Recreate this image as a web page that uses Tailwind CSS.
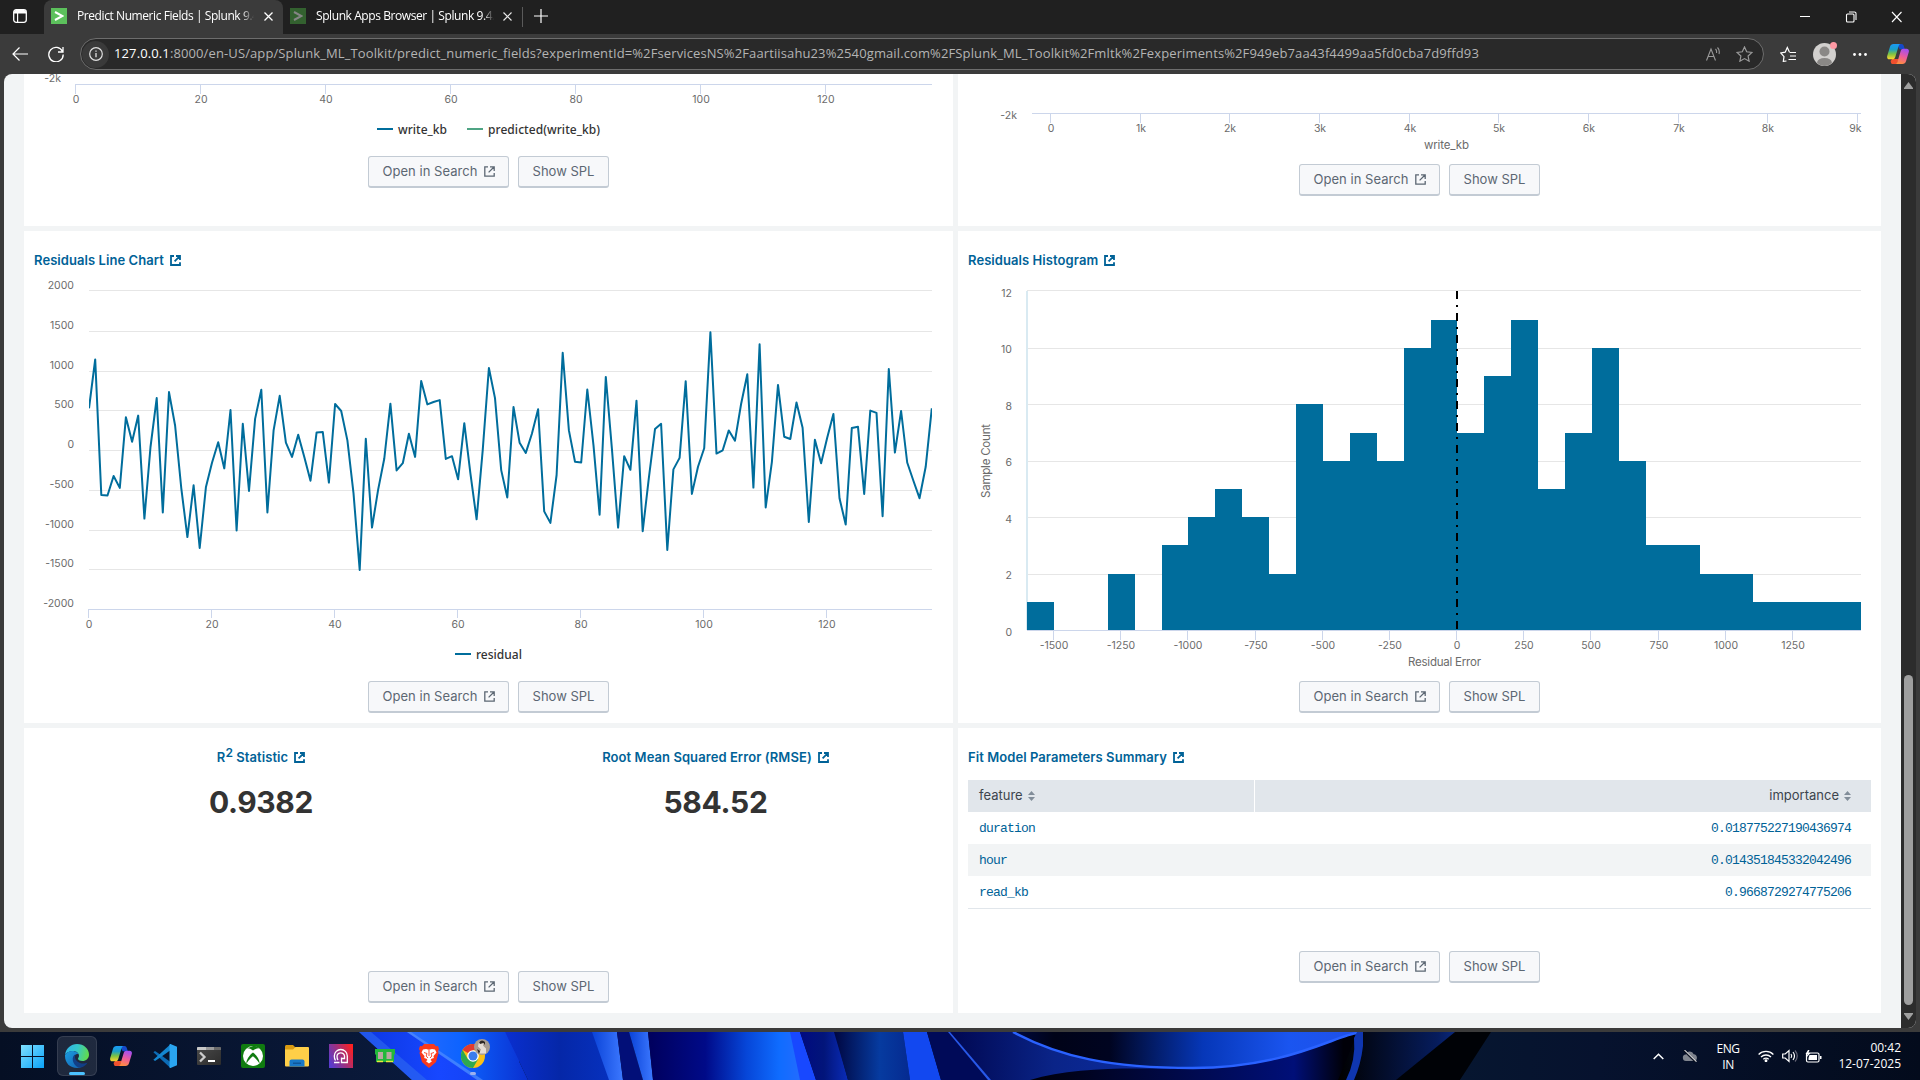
<!DOCTYPE html>
<html lang="en">
<head>
<meta charset="utf-8">
<title>Predict Numeric Fields | Splunk</title>
<script src="https://cdn.jsdelivr.net/npm/@tailwindcss/browser@4"></script>
</head>
<body class="w-[1920px] h-[1080px] overflow-hidden bg-[#3b3b3b] font-[Inter,sans-serif] flex flex-col">

<!-- shared symbols -->
<svg class="absolute w-0 h-0">
  <symbol id="ext" viewBox="0 0 11 11"><path d="M4 .8H.8v9.4h9.4V7M6 .8h4.2V5M10 1 4.6 6.4" fill="none" stroke="currentColor" stroke-width="1.3"/></symbol>
  <symbol id="extb" viewBox="0 0 11 11"><path d="M4 1H1v9h9V7.2M6 1h4v4M9.8 1.2 4.6 6.4" fill="none" stroke="currentColor" stroke-width="1.8"/></symbol>
  <symbol id="sort" viewBox="0 0 7 10"><path d="M0 4 3.5 0 7 4zM0 6h7L3.5 10z" fill="#818d99"/></symbol>
  <linearGradient id="cpA" x1="0" y1="0" x2="0" y2="1"><stop offset="0" stop-color="#1b9af5"/><stop offset=".35" stop-color="#1aa0c8"/><stop offset=".65" stop-color="#7cc242"/><stop offset="1" stop-color="#ffd52e"/></linearGradient>
  <linearGradient id="cpB" x1=".6" y1="0" x2=".3" y2="1"><stop offset="0" stop-color="#a44ff0"/><stop offset=".5" stop-color="#ee5c9a"/><stop offset="1" stop-color="#ff8f3c"/></linearGradient>
  <symbol id="copilot" viewBox="0 0 22 20">
    <path d="M12 0h2.4c1.4 0 2 .8 2.4 2l1 3.2h-5.2L10.5 1z" fill="#1549c9"/>
    <path d="M5.2 20h4.6l2-5H5L3.600 17c.3 2 .8 3 1.600 3z" fill="#f0502e"/>
    <path d="M6.500 0h7c-1.200.3-1.700 1.400-2.100 2.800L8.300 13c-.5 1.500-1.200 2.300-2.800 2.300H2.300C.6 15.300-.2 14 .2 12L3 2.800C3.600 1 4.600 0 6.500 0z" fill="url(#cpA)"/>
    <path d="M15.500 20h-7c1.200-.3 1.700-1.400 2.100-2.800L13.700 7c.5-1.500 1.200-2.300 2.800-2.300h3.200c1.700 0 2.500 1.300 2.100 3.300L19 17.200c-.6 1.800-1.600 2.800-3.500 2.800z" fill="url(#cpB)"/>
  </symbol>
</svg>

<!-- tab strip -->
<header class="h-[34px] shrink-0 bg-[#202020] flex items-end font-['Open_Sans',sans-serif] text-xs text-white">
  <div class="w-11 h-full flex items-center pl-[13px] pb-[2px]">
    <svg class="w-[14px] h-[14px]" viewBox="0 0 14 14"><rect x=".7" y=".7" width="12.600" height="12.600" rx="2.500" fill="none" stroke="#fff" stroke-width="1.300"/><path d="M1 3a2 2 0 0 1 2-2h8a2 2 0 0 1 2 2v1.500H1zM4 4h1.200v9H4z" fill="#fff"/></svg>
  </div>
  <div class="w-[239px] h-[34px] bg-[#3b3b3b] rounded-t-lg flex items-center pl-[7px] pb-[2px]">
    <div class="w-4 h-4 bg-[#5cc05c] flex items-center justify-center"><svg class="w-[10px] h-[10px]" viewBox="0 0 10 10"><path d="M1 1l7.500 4L1 9" fill="none" stroke="#fff" stroke-width="2"/></svg></div>
    <div class="ml-[10px] w-[177px] whitespace-nowrap tracking-[-0.42px] [mask-image:linear-gradient(90deg,#000_93%,transparent)]">Predict Numeric Fields | Splunk 9.4</div>
    <svg class="ml-[10px] w-[9px] h-[9px]" viewBox="0 0 9 9"><path d="M.5.5l8 8M8.500.5l-8 8" stroke="#fff" stroke-width="1.300"/></svg>
  </div>
  <div class="w-[240px] h-[34px] flex items-center pl-[7px] pb-[2px]">
    <div class="w-4 h-4 bg-[#33612f] flex items-center justify-center"><svg class="w-[10px] h-[10px]" viewBox="0 0 10 10"><path d="M1 1l7.500 4L1 9" fill="none" stroke="#858585" stroke-width="2"/></svg></div>
    <div class="ml-[10px] w-[178px] whitespace-nowrap tracking-[-0.42px] [mask-image:linear-gradient(90deg,#000_94%,transparent)]">Splunk Apps Browser | Splunk 9.4.</div>
    <svg class="ml-[9px] w-[9px] h-[9px]" viewBox="0 0 9 9"><path d="M.5.5l8 8M8.500.5l-8 8" stroke="#e8e8e8" stroke-width="1.200"/></svg>
  </div>
  <div class="w-px h-5 bg-[#5a5a5a] mb-[7px] -ml-px"></div>
  <svg class="ml-[11px] mb-[11px] w-[14px] h-[14px]" viewBox="0 0 14 14"><path d="M7 0v14M0 7h14" stroke="#fff" stroke-width="1.200"/></svg>
  <svg class="ml-auto mr-[18px] mb-[11px] w-[102px] h-[12px]" viewBox="0 0 102 12" fill="none" stroke="#fff" stroke-width="1.100"><path d="M0 5.500h10M92 1l9.500 10M101.500 1 92 11"/><rect x="46.500" y="3" width="7.500" height="8" rx="1"/><path d="M49 1h5.500a1.500 1.500 0 0 1 1.500 1.500V9"/></svg>
</header>

<!-- toolbar -->
<div class="h-10 shrink-0 flex items-center pl-3 font-['Open_Sans',sans-serif]">
  <svg class="w-4 h-[14px]" viewBox="0 0 16 14" fill="none" stroke="#fff" stroke-width="1.200"><path d="M16 7H1M7.500.5 1 7l6.500 6.500"/></svg>
  <svg class="ml-5 w-4 h-4" viewBox="0 0 16 16" fill="none" stroke="#fff" stroke-width="1.300"><path d="M14.500 5.500A7.200 7.200 0 1 0 15.200 8.500M15 1v5h-5"/></svg>
  <div class="ml-4 w-[1684px] h-8 rounded-full bg-[#292929] border border-[#6d6d6d] flex items-center">
    <div class="ml-px w-[27px] h-[27px] rounded-full bg-[#3a3a3a] flex items-center justify-center">
      <svg class="w-[14px] h-[14px]" viewBox="0 0 14 14"><circle cx="7" cy="7" r="6.300" fill="none" stroke="#e0e0e0" stroke-width="1.200"/><path d="M7 6v4.300M7 3.500v1.300" stroke="#e0e0e0" stroke-width="1.300"/></svg>
    </div>
    <div class="ml-[5px] text-[13px] text-[#b4b4b4] whitespace-nowrap tracking-[0.115px]"><span class="text-white">127.0.0.1</span>:8000/en-US/app/Splunk_ML_Toolkit/predict_numeric_fields?experimentId=%2FservicesNS%2Faartiisahu23%2540gmail.com%2FSplunk_ML_Toolkit%2Fmltk%2Fexperiments%2F949eb7aa43f4499aa5fd0cba7d9ffd93</div>
    <svg class="ml-auto w-[15px] h-[14px]" viewBox="0 0 15 14" fill="none" stroke="#9a9a9a" stroke-width="1.100"><path d="M.5 13.500 5 2l4.500 11.500M2 9.500h6M9.500 2q1.500 1.500 1 4M11.500.5q2.500 2.500 1.500 6.500"/></svg>
    <svg class="ml-[15px] mr-[10px] w-[17px] h-4" viewBox="0 0 17 16" fill="none" stroke="#9a9a9a" stroke-width="1.200"><path d="M8.500 1l2.200 4.800 5.300.6-3.900 3.600 1 5.200-4.600-2.600-4.600 2.600 1-5.200L1 6.400l5.300-.6z"/></svg>
  </div>
  <svg class="ml-4 w-4 h-4" viewBox="0 0 16 16" fill="none" stroke="#fff" stroke-width="1.200"><path d="M6.500 15 3.300 15.400 4 10.600.7 7l4.500-.8L7.300 1.500 9.400 6M9.500 6.500H16M10 10h6M8.500 13.500H16"/></svg>
  <div class="relative ml-[17px] w-[23px] h-[23px]">
    <svg class="w-[23px] h-[23px]" viewBox="0 0 23 23"><circle cx="11.500" cy="11.500" r="11.500" fill="#d2d0ce"/><circle cx="11.500" cy="8.500" r="5" fill="#8a8886"/><path d="M4 19.500q1-4.500 7.500-4.500T19 19.500Q16 23 11.500 23T4 19.500" fill="#8a8886"/></svg>
    <div class="absolute -top-[1px] right-[-1px] w-[7px] h-[7px] rounded-full bg-[#ff99a4]"></div>
  </div>
  <svg class="ml-[17px] w-[14px] h-[3px]" viewBox="0 0 14 3" fill="#fff"><circle cx="1.500" cy="1.500" r="1.400"/><circle cx="7" cy="1.500" r="1.400"/><circle cx="12.500" cy="1.500" r="1.400"/></svg>
  <svg class="ml-5 w-[22px] h-5"><use href="#copilot"/></svg>
</div>

<!-- page -->
<div class="h-[954px] shrink-0 mx-1 mb-1 rounded-lg overflow-hidden bg-[#f2f4f5] flex">
  <main class="w-[1897px] pl-5 pr-5 grid grid-cols-[929px_923px] grid-rows-[152px_492px_285px] gap-[5px]">

    <section class="bg-white flex flex-col overflow-hidden">
      <svg id="c1" class="w-[929px] h-[82px] shrink-0" viewBox="24 74 929 82"></svg>
      <div class="btns flex gap-[9px] justify-center"></div>
    </section>
    <section class="bg-white flex flex-col overflow-hidden">
      <svg id="c2" class="w-[923px] h-[90px] shrink-0" viewBox="958 74 923 90"></svg>
      <div class="btns flex gap-[9px] justify-center"></div>
    </section>

    <section class="bg-white flex flex-col overflow-hidden">
      <h2 class="pt-[19px] pl-[10px] h-11 shrink-0 flex gap-[6px] items-start leading-5 text-[13px] font-semibold text-[#006297] tracking-[0.07px]"><span>Residuals Line Chart</span><svg class="mt-[5px] w-[11px] h-[11px]"><use href="#extb"/></svg></h2>
      <svg id="c3" class="w-[929px] h-[406px] shrink-0" viewBox="24 275 929 406"></svg>
      <div class="btns flex gap-[9px] justify-center"></div>
    </section>
    <section class="bg-white flex flex-col overflow-hidden">
      <h2 class="pt-[19px] pl-[10px] h-11 shrink-0 flex gap-[6px] items-start leading-5 text-[13px] font-semibold text-[#006297] tracking-[0.07px]"><span>Residuals Histogram</span><svg class="mt-[5px] w-[11px] h-[11px]"><use href="#extb"/></svg></h2>
      <svg id="c4" class="w-[923px] h-[406px] shrink-0" viewBox="958 275 923 406"></svg>
      <div class="btns flex gap-[9px] justify-center"></div>
    </section>

    <section class="bg-white flex flex-col pb-[10px]">
      <div class="grid grid-cols-[474px_435px] pt-[19px] text-center text-[#006297] text-[13px] font-semibold leading-5 tracking-[0.07px]">
        <h2 class="flex gap-[6px] items-center justify-center"><span>R<sup class="text-[12px] -top-[5px]">2</sup> Statistic</span><svg class="w-[11px] h-[11px]"><use href="#extb"/></svg></h2>
        <h2 class="flex gap-[6px] items-center justify-center"><span>Root Mean Squared Error (RMSE)</span><svg class="w-[11px] h-[11px]"><use href="#extb"/></svg></h2>
        <div class="mt-[15px] text-[30px] leading-[40px] tracking-[-0.4px] font-bold text-[#333]">0.9382</div>
        <div class="mt-[15px] text-[30px] leading-[40px] tracking-[-0.3px] font-bold text-[#333]">584.52</div>
      </div>
      <div class="btns mt-auto flex gap-[9px] justify-center"></div>
    </section>
    <section class="bg-white flex flex-col px-[10px]">
      <h2 class="pt-[19px] h-[52px] shrink-0 flex gap-[6px] items-start leading-5 text-[13px] font-semibold text-[#006297] tracking-[0.07px]"><span>Fit Model Parameters Summary</span><svg class="mt-[5px] w-[11px] h-[11px]"><use href="#extb"/></svg></h2>
      <div class="grid grid-cols-[286px_616px] gap-px h-8 text-[13px] leading-[31px] text-[#3c444d]">
        <div class="bg-[#e1e6eb] pl-[11px] flex items-center gap-[5px]"><span class="-mt-px">feature</span><svg class="w-[7px] h-[10px]"><use href="#sort"/></svg></div>
        <div class="bg-[#e1e6eb] pr-5 flex items-center justify-end gap-[5px]"><span class="-mt-px">importance</span><svg class="w-[7px] h-[10px]"><use href="#sort"/></svg></div>
      </div>
      <div class="border-b border-[#e1e6eb] font-['Liberation_Mono',monospace] text-[13px] tracking-[-0.8px] leading-[34px] text-[#006297]">
        <div class="flex justify-between h-8 pl-[11px] pr-5"><span>duration</span><span>0.018775227190436974</span></div>
        <div class="flex justify-between h-8 pl-[11px] pr-5 bg-[#f2f4f5]"><span>hour</span><span>0.014351845332042496</span></div>
        <div class="flex justify-between h-8 pl-[11px] pr-5"><span>read_kb</span><span>0.9668729274775206</span></div>
      </div>
      <div class="btns mt-[42px] flex gap-[9px] justify-center"></div>
    </section>
  </main>
  <div class="w-[15px] bg-[#2c2c2c] flex flex-col items-center">
    <svg class="mt-2 w-[9px] h-[7px]" viewBox="0 0 9 7"><path d="M4.500 0 9 6v1H0V6z" fill="#9f9f9f"/></svg>
    <div class="mt-[586px] w-[9px] h-[330px] rounded-full bg-[#9f9f9f]"></div>
    <svg class="mt-[8px] w-[9px] h-[7px]" viewBox="0 0 9 7"><path d="M4.500 7 9 1V0H0v1z" fill="#9f9f9f"/></svg>
  </div>
</div>

<!-- taskbar -->
<footer class="relative h-12 shrink-0 bg-[#050f26] flex items-center text-white font-['Open_Sans',sans-serif]">
  <svg class="absolute inset-0 w-[1920px] h-12" viewBox="0 0 1920 48" preserveAspectRatio="none">
    <defs>
      <linearGradient id="w0"><stop offset="0" stop-color="#050f24"/><stop offset="1" stop-color="#0a1a3c"/></linearGradient>
      <linearGradient id="w1"><stop offset="0" stop-color="#0c36e0"/><stop offset=".5" stop-color="#1747ff"/><stop offset="1" stop-color="#1140e8"/></linearGradient>
      <linearGradient id="w2"><stop offset="0" stop-color="#2a6cff"/><stop offset=".45" stop-color="#0d63ff"/><stop offset="1" stop-color="#0a30d0"/></linearGradient>
      <linearGradient id="w3"><stop offset="0" stop-color="#0a2fd0"/><stop offset=".5" stop-color="#0527a8"/><stop offset="1" stop-color="#0632c0"/></linearGradient>
      <linearGradient id="w4"><stop offset="0" stop-color="#00005c"/><stop offset=".35" stop-color="#000a88"/><stop offset=".6" stop-color="#0646d8"/><stop offset=".8" stop-color="#0f6cff"/><stop offset="1" stop-color="#2d6cff"/></linearGradient>
      <linearGradient id="w5"><stop offset="0" stop-color="#000a80"/><stop offset=".5" stop-color="#02157a"/><stop offset="1" stop-color="#0a2cb8"/></linearGradient>
      <linearGradient id="w6"><stop offset="0" stop-color="#000640"/><stop offset=".6" stop-color="#063ba0"/><stop offset="1" stop-color="#052a90"/></linearGradient>
      <linearGradient id="w7"><stop offset="0" stop-color="#000750"/><stop offset=".45" stop-color="#0a2488"/><stop offset="1" stop-color="#0c2fa8"/></linearGradient>
      <linearGradient id="w8"><stop offset="0" stop-color="#000a40"/><stop offset=".12" stop-color="#000318"/><stop offset=".28" stop-color="#000420"/><stop offset=".55" stop-color="#0637b8"/><stop offset=".8" stop-color="#1a55f0"/><stop offset="1" stop-color="#2050e8"/></linearGradient>
      <linearGradient id="w9"><stop offset="0" stop-color="#00000a"/><stop offset=".5" stop-color="#000a50"/><stop offset=".8" stop-color="#000f78"/><stop offset=".95" stop-color="#000008"/></linearGradient>
      <linearGradient id="w10"><stop offset="0" stop-color="#000"/><stop offset=".8" stop-color="#061c5c"/><stop offset="1" stop-color="#0a2c88"/></linearGradient>
      <linearGradient id="w11"><stop offset="0" stop-color="#061630"/><stop offset=".3" stop-color="#06122e"/><stop offset="1" stop-color="#030b1c"/></linearGradient>
      <linearGradient id="w12"><stop offset="0" stop-color="#0a43d8"/><stop offset="1" stop-color="#3c78ff"/></linearGradient>
    </defs>
    <rect width="420" height="48" fill="url(#w0)"/>
    <path d="M359 0h160v48H412z" fill="url(#w1)"/>
    <path d="M359 0h12l56 48h-15z" fill="#2f6bf0" opacity=".6"/>
    <path d="M407 0h98l23 48h-50z" fill="url(#w2)"/>
    <path d="M407 0h4l72 48h-6z" fill="#5b93ff" opacity=".6"/>
    <path d="M505 0h90l20 48h-87z" fill="url(#w3)"/>
    <path d="M592 0h25l6 48h-14z" fill="url(#w12)"/>
    <path d="M617 0h12l14 48h-20z" fill="#020f78"/>
    <path d="M629 0h19l5 48h-10z" fill="url(#w12)"/>
    <path d="M648 0h144l20 48H653z" fill="url(#w4)"/>
    <path d="M790 0h10l16 48h-16z" fill="#1848ff"/>
    <path d="M800 0h35l13 48h-32z" fill="url(#w5)"/>
    <path d="M834 0h69l7 48h-62z" fill="url(#w6)"/>
    <path d="M903 0h24l14 48h-31z" fill="#1248f0"/>
    <path d="M927 0h22l41 48h-49z" fill="#000a58"/>
    <path d="M948 0h66c50 24 100 34 170 36v12H990z" fill="url(#w7)"/>
    <path d="M948 0h2l41 48h-3z" fill="#2858e8"/>
    <path d="M1030 48c40-12 90-12 140-11l190-37v48z" fill="url(#w9)"/>
    <path d="M1013 0h345c-20 4-70 36-165 36C1110 36 1060 24 1013 0z" fill="url(#w8)"/>
    <path d="M1013 0c47 25 97 36 180 36 95 0 145-34 165-35" fill="none" stroke="#2a62ff" stroke-width="2.500"/>
    <path d="M1358 0h104l-64 48h-60z" fill="url(#w10)"/>
    <path d="M1357 0h6v14q-2 18-9 34h-8q10-20 8-42z" fill="#0f36b0"/>
    <path d="M1455 0h40l-35 48h-64z" fill="#000206"/>
    <path d="M1491 0h429v48H1460z" fill="url(#w11)"/>
  </svg>
  <div class="relative w-full h-full flex items-center pl-[11px] [&>div]:w-11 [&>div]:h-full [&>div]:shrink-0 [&>div]:flex [&>div]:items-center [&>div]:justify-center">
    <div><svg class="mr-px w-[23px] h-[23px]" viewBox="0 0 23 23"><defs><linearGradient id="win" x1="0" y1="0" x2="1" y2="1"><stop offset="0" stop-color="#7fe0ff"/><stop offset="1" stop-color="#0aa2f8"/></linearGradient></defs><path d="M0 0h11v11H0zM12 0h11v11H12zM0 12h11v11H0zM12 12h11v11H12z" fill="url(#win)"/></svg></div>
    <div class="relative"><span class="absolute left-[2px] top-1 w-10 h-10 rounded-md bg-white/10 border border-white/10"></span><span class="absolute left-[14px] top-10 w-4 h-[3px] rounded-full bg-[#4cc2ff]"></span>
      <svg class="relative w-6 h-6" viewBox="0 0 24 24"><defs><linearGradient id="eg1" x1="0" y1=".3" x2="1" y2=".5"><stop offset="0" stop-color="#2fb4ea"/><stop offset=".5" stop-color="#35c8c8"/><stop offset="1" stop-color="#62dc4a"/></linearGradient><linearGradient id="eg2" x1="0" y1="0" x2="1" y2="1"><stop offset="0" stop-color="#1b9de0"/><stop offset="1" stop-color="#1460b0"/></linearGradient></defs>
      <path d="M0 11C1 4 6 0 12 0c7 0 12 5 12 10.500 0 4-3 6.500-6.500 6.500-3 0-4.500-1.200-4.500-2.200 0-.8 1-1.300 1-3 0-2.600-2.500-4.800-6-4.800-3.500 0-7 2-8 4z" fill="url(#eg1)"/>
      <path d="M0 11c2-3.500 6-4.500 8.500-4 2 .4 4 1.500 5 3-2-.5-5 1-5 5 0 4.500 4 8 8 8-1.500.7-3 1-4.500 1C5 24 0 19 0 12z" fill="url(#eg2)"/>
      <path d="M10.500 10.300C6 12 7 21 13.500 23.400c4 .4 7.500-1.900 9-5-2 1.200-5 1.600-7.500.6-4-1.500-6-5-4.500-8.700z" fill="#123f86"/></svg></div>
    <div><svg class="w-[22px] h-5"><use href="#copilot"/></svg></div>
    <div><svg class="w-6 h-6" viewBox="0 0 24 24"><path d="M.4 8.200 2 6.900l3 2L17.500 18v6z" fill="#0c6bb5"/><path d="M.4 15.800 2 17.100l3-2L17.800 6V0z" fill="#1486d0"/><path d="M17.500 0 24 2.800v18.400L17.500 24c-.8 0-1-.4-1-1.200V1.200c0-.8.200-1.200 1-1.200z" fill="#2aa5f0"/></svg></div>
    <div><svg class="w-6 h-[18px]" viewBox="0 0 24 18"><defs><linearGradient id="tm" x1="0" y1="0" x2="1" y2="1"><stop offset="0" stop-color="#4a4a4a"/><stop offset="1" stop-color="#2c2c2c"/></linearGradient></defs><rect width="24" height="18" rx="1" fill="url(#tm)"/><path d="M0 1a1 1 0 0 1 1-1h8v3H0z" fill="#c8c8c8"/><path d="M9 0h8v3H9z" fill="#9a9a9a"/><path d="M17 0h6a1 1 0 0 1 1 1v2h-7z" fill="#6a6a6a"/><path d="M3 5.500 7.500 10 3 14.500" fill="none" stroke="#ccc" stroke-width="2.300"/><path d="M11 14h7" stroke="#fff" stroke-width="2"/></svg></div>
    <div><svg class="w-6 h-6" viewBox="0 0 24 24"><rect width="24" height="24" rx="2" fill="#107c10"/><circle cx="12" cy="12" r="10" fill="#fff"/><path d="M5.500 4.500Q8 3.500 12 6.500q4-3 6.500-2Q15 1 12 2T5.500 4.500M12 8.500c4 3 7 8 6.500 11C15 14.500 13 13 12 12.300 11 13 9 14.500 5.500 19.500 5 16.500 8 11.500 12 8.500" fill="#107c10"/></svg></div>
    <div><svg class="w-6 h-[22px]" viewBox="0 0 24 22"><path d="M0 1.500C0 .7.700 0 1.500 0H8l2.500 2.500V6H0z" fill="#d99a12"/><path d="M0 4.500h8L10.500 2H23a1 1 0 0 1 1 1v17.500a1 1 0 0 1-1 1H1a1 1 0 0 1-1-1z" fill="#ffcf48"/><path d="M4.500 21.500v-5a2 2 0 0 1 2-2h11a2 2 0 0 1 2 2v5z" fill="#1878c8"/><path d="M8 17.500h8v1.500H8z" fill="#0f569a"/></svg></div>
    <div><svg class="w-6 h-6" viewBox="0 0 24 24"><defs><linearGradient id="pr" x1="0" y1=".7" x2="1" y2=".2"><stop offset="0" stop-color="#5a3ccc"/><stop offset=".5" stop-color="#a0307c"/><stop offset="1" stop-color="#ff2020"/></linearGradient></defs><rect width="24" height="24" fill="url(#pr)"/><path d="M5 18.500h5.500M6.500 16.500C5.500 15 5.300 13.500 5.300 12a6.500 6.500 0 0 1 13 0v6.500H12.500v-5M9 16c-.8-1-1-2.500-1-4a3.800 3.800 0 0 1 7.500 0v2.500h-3" fill="none" stroke="#fff" stroke-width="1.300"/></svg></div>
    <div><svg class="w-5 h-4" viewBox="0 0 20 16"><path d="M0 1h20v5l-1 1v7H1V7L0 6z" fill="#22b83a"/><path d="M3 4h5v7H3zM11.500 4h5v7h-5z" fill="#b8a8a0"/><path d="M2 13.500h6M11 13.500h7" stroke="#e8e83c" stroke-width="1.300"/></svg></div>
    <div><svg class="w-5 h-6" viewBox="0 0 20 24"><path d="M5 0h10l2 2.200 2-.2 1 3-1 2 .5 2L17 18l-4.500 4L10 24l-2.500-2L3 18 .5 9 1 7 0 5l1-3 2 .2z" fill="#fb3a1c"/><path d="M4 5.500 7 5l3 .7L13 5l3 .5 1.500 3L14.500 12l.3 2-2.300.8-1 1.200 1.500 1.200L10 19.500 7 17.200 8.500 16l-1-1.200L5.200 14l.3-2-3-3.500z" fill="#fff"/><path d="m5 8.500 3 1-.8 2.500L9 14M15 8.500l-3 1 .8 2.500L11 14M10 6v6" fill="none" stroke="#fb3a1c" stroke-width=".9"/></svg></div>
    <div class="relative"><svg class="w-6 h-6" viewBox="0 0 24 24"><circle cx="12" cy="12" r="12" fill="#fbc116"/><path d="M12 12 1.600 6A12 12 0 0 1 22.400 6H12z" fill="#e33b2e"/><path d="M1.600 6A12 12 0 0 0 12 24l5.200-9L12 12 6.800 15z" fill="#2da94f"/><circle cx="12" cy="12" r="5.800" fill="#fff"/><circle cx="12" cy="12" r="4.500" fill="#3b7ded"/></svg>
      <svg class="absolute left-[23px] top-[7px] w-4 h-4" viewBox="0 0 16 16"><circle cx="8" cy="8" r="8" fill="#a89c92"/><path d="M5 2.500q3-2 5 1l-1 3 3 3v5H5l2-4-3-3z" fill="#e6ddd6"/><path d="M5 3q3-3 6 0v3L9.500 4 6 5zM3 10l3 2-1 3z" fill="#2c2624"/></svg>
      <span class="absolute left-[19px] top-10 w-[6px] h-[3px] rounded-full bg-[#9bb0ee]"></span></div>
    <svg class="ml-auto w-[11px] h-[7px]" viewBox="0 0 11 7"><path d="M.7 6 5.500 1.200 10.300 6" fill="none" stroke="#fff" stroke-width="1.500"/></svg>
    <svg class="ml-[18px] w-4 h-3" viewBox="0 0 16 13"><path d="M4 12a3.500 3.500 0 0 1-.5-7A4.500 4.500 0 0 1 12 4.500 3.800 3.800 0 0 1 12.500 12z" fill="#80858f"/><path d="M1 0l13.500 13" stroke="#0a1020" stroke-width="2.500"/><path d="M2 0l13 12.500" stroke="#e8e8e8" stroke-width="1.100"/></svg>
    <div class="!w-[24px] ml-[18px] !block text-center text-xs leading-4 pt-[9px] tracking-[-0.4px]">ENG<br>IN</div>
    <svg class="ml-[18px] w-4 h-3" viewBox="0 0 16 12" fill="none" stroke="#fff" stroke-width="1.300"><path d="M.6 4.500a10.500 10.500 0 0 1 14.800 0M3 7a7.200 7.200 0 0 1 10 0M5.300 9.300a4 4 0 0 1 5.400 0"/><circle cx="8" cy="10.700" r=".8" fill="#fff"/></svg>
    <svg class="ml-2 w-4 h-[14px]" viewBox="0 0 16 14" fill="none" stroke="#fff" stroke-width="1.200"><path d="M.7 5h2.500L7 1.500v11L3.200 9H.7zM9 5q1.500 2 0 4M11 3q3 4 0 8"/><path d="M13 1.500q4.500 5.500 0 11" stroke="#667"/></svg>
    <svg class="ml-[7px] w-[17px] h-[13px]" viewBox="0 0 17 13"><rect x="1.500" y="3" width="12.500" height="9" rx="1.500" fill="none" stroke="#fff" stroke-width="1.200"/><path d="M4.500 5H12v5H3.500V8zM15 6h1.500v3H15zM3 0 .5 4h2L1.500 7.500 5.500 3H3.300L4.500 0z" fill="#fff"/></svg>
    <div class="!w-[79px] mr-[19px] !block text-right text-xs leading-4 pt-2 whitespace-nowrap">00:42<br>12-07-2025</div>
  </div>
</footer>

<script>
// Action buttons under every panel
document.querySelectorAll('.btns').forEach(function (el) {
  el.innerHTML =
    '<button class="w-[141px] h-8 rounded-[3px] border border-b-2 border-[#c3cbd4] bg-[#f7f8fa] text-[13px] text-[#5c6773] flex items-center justify-center gap-[6px]"><span class="tracking-[0.05px]">Open in Search</span><svg class="w-[11px] h-[11px]"><use href="#ext"/></svg></button>' +
    '<button class="w-[91px] h-8 rounded-[3px] border border-b-2 border-[#c3cbd4] bg-[#f7f8fa] text-[13px] text-[#5c6773]">Show SPL</button>';
});

var AX = '#ccd6eb', GR = '#e6e6e6';
function line(x1, y1, x2, y2, c) { return '<path d="M' + x1 + ' ' + y1 + 'L' + x2 + ' ' + y2 + '" stroke="' + c + '" fill="none"/>'; }
function txt(x, y, s, o) { return '<text x="' + x + '" y="' + y + '" font-size="10.5" fill="#6b6b6b" text-anchor="middle" ' + (o || '') + '>' + s + '</text>'; }
function legend(x, y, s, len, c) {
  return '<path d="M' + x + ' ' + y + 'h16" stroke="' + c + '" stroke-width="2"/>' +
    '<text x="' + (x + 21) + '" y="' + (y + 5) + '" font-size="12" fill="#333" font-weight="500" font-family="Noto Sans, sans-serif" textLength="' + len + '">' + s + '</text>';
}
function px(v) { return Math.floor(v) + .5; }

// Actual vs. predicted, bottom edge
var h = line(75, 84.5, 932, 84.5, AX) + txt(61, 82, '-2k', 'style="text-anchor:end"');
for (var i = 0; i < 7; i++) { var x = px(75.5 + i * 125); h += line(x, 85, x, 94, AX) + txt(x + .5, 103, i * 20); }
h += legend(377, 129, 'write_kb', 49, '#006d9c') + legend(467, 129, 'predicted(write_kb)', 112, '#4fa484');
c1.innerHTML = h;

// Scatter, bottom edge
h = line(1032, 113.5, 1861, 113.5, AX) + txt(1017, 119, '-2k', 'style="text-anchor:end"');
for (i = 0; i < 10; i++) { x = px(1050.5 + i * 89.67); h += line(x, 114, x, 123, AX) + txt(i == 9 ? x - 2 : x + .5, 132, i ? i + 'k' : 0); }
h += txt(1446.5, 149, 'write_kb', 'textLength="45" style="font-size:11.5px"');
c2.innerHTML = h;

// Residual line chart; samples are thirds of a pixel, 631 being the zero line
var d = [503,355,765,767,708,744,530,604,525,837,620,472,818,454,555,745,893,736,926,742,668,606,685,508,873,550,753,535,447,818,570,465,607,650,583,650,722,576,575,728,490,511,600,760,992,595,864,750,655,489,691,669,580,650,420,491,484,478,656,648,718,548,700,839,630,381,472,690,773,499,607,638,580,506,815,850,705,335,570,665,667,446,615,825,408,625,864,648,689,480,875,715,566,550,932,688,653,421,762,680,624,273,640,630,570,601,490,400,743,309,803,665,432,589,596,485,562,847,598,669,592,520,775,855,563,559,762,510,517,830,384,637,511,667,722,775,680,503];
h = '';
for (i = 0; i < 9; i++) {
  var y = [290.5, 331.5, 371.5, 410.5, 450.5, 490.5, 530.5, 569.5, 609.5][i];
  h += line(89, y, 932, y, i == 8 ? AX : GR) + txt(74, [289, 329, 369, 408, 448, 488, 528, 567, 607][i], 2000 - i * 500, 'style="text-anchor:end"');
}
for (i = 0; i < 7; i++) { x = px(88.500 + i * 123); h += line(x, 609, x, 618, AX) + txt(x + .5, 628, i * 20); }
h += '<clipPath id="cl"><rect x="89" y="285" width="843" height="330"/></clipPath><polyline clip-path="url(#cl)" fill="none" stroke="#006d9c" stroke-width="2" stroke-linejoin="round" points="' +
  d.map(function (v, k) { return (89 + k * 6.152).toFixed(1) + ',' + (450.6 + (v - 631) * .991 / 3).toFixed(1); }).join(' ') + '"/>';
h += legend(455, 654, 'residual', 46, '#006d9c');
c3.innerHTML = h;

// Residual histogram
var b = [1,0,0,2,0,3,4,5,4,2,8,6,7,6,10,11,7,9,11,5,7,10,6,3,3,2,2,1,1,1,1];
h = '';
for (i = 0; i < 7; i++) {
  y = [290.5, 348.5, 404.5, 461.5, 517.5, 574.5, 630.5][i];
  h += line(1027, y, 1861, y, i == 6 ? AX : GR) + txt(1012, [297, 353, 409.5, 466, 522.5, 579, 635.5][i], 12 - i * 2, 'style="text-anchor:end"');
}
h += '<rect x="1026" y="291" width="2" height="339" fill="#d9eaf2"/>';
var P = '';
b.forEach(function (v, k) {
  var l = Math.round(1027 + k * 26.9), r = Math.round(1027 + (k + 1) * 26.9), t = Math.round(630 - v * 28.2);
  if (v) P += 'M' + l + ' ' + t + 'H' + r + 'V630H' + l + 'z';
});
h += '<path d="' + P + '" fill="#006d9c" shape-rendering="crispEdges"/>';
for (i = 0; i < 12; i++) { x = px(1053.600 + i * 67.170); h += line(x, 631, x, 640, AX) + txt(x + .5, 649, -1500 + i * 250); }
h += '<path d="M1457 291V630" stroke="#000" stroke-width="2" stroke-dasharray="8 6 2 6"/>';
h += txt(1444.5, 666, 'Residual Error', 'textLength="73" style="font-size:11.5px"');
h += txt(0, 0, 'Sample Count', 'textLength="74" transform="translate(990 461) rotate(-90)" style="font-size:11.5px"');
c4.innerHTML = h;
</script>
</body>
</html>
